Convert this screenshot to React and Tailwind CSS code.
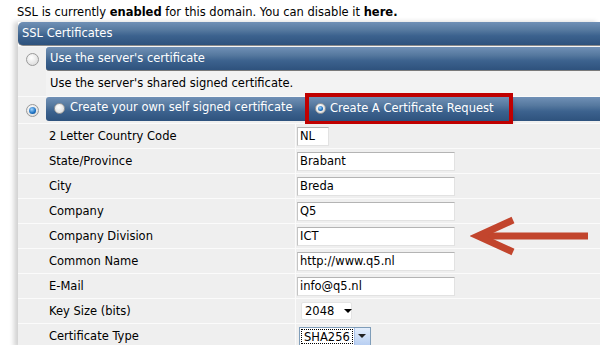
export default function App() {
  const font = { fontFamily: '"DejaVu Sans", Verdana, sans-serif' };
  const bar =
    "bg-[linear-gradient(to_bottom,#7090b6_0%,#56799f_35%,#3c628e_60%,#2e527d_100%)]";

  const rows = [
    { label: "2 Letter Country Code", value: "NL", small: true },
    { label: "State/Province", value: "Brabant" },
    { label: "City", value: "Breda" },
    { label: "Company", value: "Q5" },
    { label: "Company Division", value: "ICT" },
    { label: "Common Name", value: "http://www.q5.nl" },
    { label: "E-Mail", value: "info@q5.nl" },
  ];

  const Radio = ({ checked, small }) => (
    <span
      className={`inline-block rounded-full border border-[#9a9a9a] bg-[radial-gradient(circle_at_40%_35%,#ffffff,#d4d4d4)] ${
        small ? "w-[11px] h-[11px]" : "w-[13px] h-[13px]"
      } relative shrink-0`}
    >
      {checked && (
        <span className="absolute inset-[2px] rounded-full bg-[radial-gradient(circle_at_40%_35%,#9fd4ff,#1a6fc0_60%,#0b3f7a)]" />
      )}
    </span>
  );

  return (
    <div className="relative w-[600px] h-[345px] overflow-hidden bg-white text-[11.5px] text-black whitespace-nowrap" style={font}>
      {/* top notice */}
      <div className="h-[22px] pl-[17px] pt-[5px] leading-[14px]">
        SSL is currently <b>enabled</b> for this domain. You can disable it <b>here.</b>
      </div>

      {/* panel */}
      <div className="ml-[18px] shadow-[-4px_0_5px_rgba(0,0,0,0.18)]">
        <div className={`h-[24px] ${bar} rounded-l-[5px] text-white pl-[4px] leading-[23px] border-b border-[#8a8a8a]`}>
          SSL Certificates
        </div>

        {/* option 1 */}
        <div className="flex h-[25px] border-t border-[#f6f6f6]">
          <div className="w-[28px] bg-[#efefef] flex items-center justify-center">
            <Radio />
          </div>
          <div className={`flex-1 ${bar} rounded-l-[3px] text-white pl-[4px] leading-[23px] border-b border-[#7a7a7a]`}>
            Use the server's certificate
          </div>
        </div>
        <div className="flex h-[25px]">
          <div className="w-[28px] bg-[#efefef]" />
          <div className="flex-1 bg-[#f3f3f3] pl-[4px] leading-[25px]">
            Use the server's shared signed certificate.
          </div>
        </div>

        {/* option 2 */}
        <div className="flex h-[27px] border-t border-[#fafafa] bg-[#efefef]">
          <div className="w-[28px] flex items-center justify-center">
            <Radio checked />
          </div>
          <div className={`flex-1 h-[24px] ${bar} rounded-l-[3px] text-white flex items-center`}>
            <span className="w-[263px] flex items-center gap-[5px] pl-[8px] -mt-[2px]">
              <Radio small />
              <span>Create your own self signed certificate</span>
            </span>
            <span className="w-[200px] h-full flex items-center gap-[4px] pl-[6px] outline-[4px] outline-solid outline-[#c00000] shadow-[3px_3px_5px_rgba(0,0,0,0.35)]">
              <span className="-mt-[2px] flex"><Radio small checked /></span>
              <span>Create A Certificate Request</span>
            </span>
          </div>
        </div>

        {/* form */}
        {rows.map((r) => (
          <div key={r.label} className="flex h-[25px] border-t border-[#fbfbfb]">
            <div className="w-[28px] bg-[#efefef]" />
            <div className="w-[250px] bg-[#efefef] pl-[3px] leading-[24px] border-r border-[#fbfbfb]">{r.label}</div>
            <div className="flex-1 bg-[#efefef] pl-[1px] flex items-center">
              <div
                className={`h-[19px] bg-white border border-[#e2e2e2] border-t-[#b4b4b4] border-l-[#c4c4c4] pl-[2px] leading-[17px] ${
                  r.small ? "w-[32px]" : "w-[158px]"
                }`}
              >
                {r.value}
              </div>
            </div>
          </div>
        ))}

        <div className="flex h-[25px] border-t border-[#fbfbfb]">
          <div className="w-[28px] bg-[#efefef]" />
          <div className="w-[250px] bg-[#efefef] pl-[3px] leading-[24px] border-r border-[#fbfbfb]">Key Size (bits)</div>
          <div className="flex-1 bg-[#efefef] pl-[5px] flex items-center">
            <div className="h-[18px] w-[51px] bg-white border border-[#e4e4e4] rounded-[2px] flex items-center pl-[3px] leading-[16px]">
              <span>2048</span>
              <span className="ml-[10px] w-0 h-0 border-l-[4px] border-r-[4px] border-t-[4px] border-l-transparent border-r-transparent border-t-black" />
            </div>
          </div>
        </div>

        <div className="flex h-[25px] border-t border-[#fbfbfb]">
          <div className="w-[28px] bg-[#efefef]" />
          <div className="w-[250px] bg-[#efefef] pl-[3px] leading-[24px] border-r border-[#fbfbfb]">Certificate Type</div>
          <div className="flex-1 bg-[#efefef] pl-[3px] flex items-center">
            <div className="h-[19px] flex items-stretch bg-white border border-[#7f9db9]">
              <span className="m-[1px] px-[2px] border border-dotted border-black leading-[14px]">SHA256</span>
              <span className="w-[16px] bg-[linear-gradient(to_bottom,#e4eefc,#b8cff2)] border-l border-[#a8c0e8] flex items-center justify-center">
                <span className="w-0 h-0 border-l-[4px] border-r-[4px] border-t-[4px] border-l-transparent border-r-transparent border-t-[#222]" />
              </span>
            </div>
          </div>
        </div>
      </div>

      {/* annotation arrow */}
      <svg className="absolute left-[470px] top-[212px]" width="125" height="48" viewBox="0 0 125 48">
        <path d="M118 24 H12" stroke="#c2452d" strokeWidth="7" fill="none" />
        <path d="M43 8 L8 24 L43 40" stroke="#c2452d" strokeWidth="7" fill="none" strokeLinejoin="miter" />
      </svg>
    </div>
  );
}
